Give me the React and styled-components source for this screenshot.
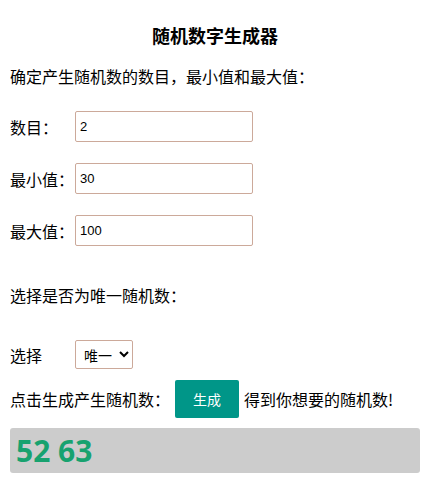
import React, { useState } from 'react';
import styled, { createGlobalStyle } from 'styled-components';

const GlobalStyle = createGlobalStyle`
    body {
        margin: 0;
        background: #fff;
        font-family: "Noto Sans CJK SC", "Noto Sans", sans-serif;
        color: #000;
    }
`;

const Page = styled.div`
    display: flex;
    flex-direction: column;
    padding: 20px 4px 0 10px;
`;

const Title = styled.h1`
    margin: 0;
    height: 30px;
    line-height: 30px;
    font-size: 18px;
    font-weight: bold;
    text-align: center;
`;

const Text = styled.p`
    margin: ${props => props.top}px 0 0;
    height: 24px;
    line-height: 24px;
    font-size: 16px;
`;

const FormRows = styled.div`
    display: flex;
    flex-direction: column;
    gap: 21px;
    margin-top: 23px;
`;

const Row = styled.div`
    display: flex;
    align-items: center;
    margin-top: ${props => props.top || 0}px;
    font-size: 16px;
    line-height: 24px;
    white-space: nowrap;
`;

const Label = styled.label`
    width: 65px;
    flex: none;
`;

const Input = styled.input`
    box-sizing: border-box;
    width: 178px;
    height: 31px;
    padding: 0 4px;
    border: 1px solid #cca99a;
    border-radius: 2px;
    font-family: "Liberation Sans", Arial, sans-serif;
    font-size: 13px;
    outline: none;
`;

const Select = styled.select`
    box-sizing: border-box;
    width: 58px;
    height: 29px;
    padding: 0 4px;
    border: 1px solid #cca99a;
    border-radius: 2px;
    background: #fff;
    font-family: "Noto Sans CJK SC", sans-serif;
    font-size: 14px;
`;

const GenerateButton = styled.button`
    width: 64px;
    height: 38px;
    margin: 0 5px;
    border: none;
    border-radius: 2px;
    background: #009688;
    color: #fff;
    font-family: "Noto Sans CJK SC", sans-serif;
    font-size: 14px;
    cursor: pointer;
`;

const Result = styled.div`
    box-sizing: border-box;
    margin-top: 10px;
    width: 410px;
    height: 45px;
    padding: 0 6px;
    border-radius: 3px;
    background: #cccccc;
    color: #17a26f;
    font-family: "Noto Sans", sans-serif;
    font-weight: bold;
    font-size: 30px;
    line-height: 46px;
`;

export default function App() {
    const [count, setCount] = useState('2');
    const [min, setMin] = useState('30');
    const [max, setMax] = useState('100');
    const [mode, setMode] = useState('unique');
    const [result, setResult] = useState('52 63');

    const generate = () => {
        const n = parseInt(count, 10) || 0;
        const lo = parseInt(min, 10) || 0;
        const hi = parseInt(max, 10) || 0;
        const out = [];
        let guard = 0;
        while (out.length < n && guard < 10000) {
            guard++;
            const v = lo + Math.floor(Math.random() * (hi - lo + 1));
            if (mode === 'unique' && out.includes(v)) continue;
            out.push(v);
        }
        setResult(out.join(' '));
    };

    return (
        <>
            <GlobalStyle />
            <Page>
                <Title>随机数字生成器</Title>
                <Text top={14}>确定产生随机数的数目，最小值和最大值：</Text>
                <FormRows>
                    <Row>
                        <Label>数目：</Label>
                        <Input value={count} onChange={e => setCount(e.target.value)} />
                    </Row>
                    <Row>
                        <Label>最小值：</Label>
                        <Input value={min} onChange={e => setMin(e.target.value)} />
                    </Row>
                    <Row>
                        <Label>最大值：</Label>
                        <Input value={max} onChange={e => setMax(e.target.value)} />
                    </Row>
                </FormRows>
                <Text top={37}>选择是否为唯一随机数：</Text>
                <Row top={33}>
                    <Label>选择</Label>
                    <Select value={mode} onChange={e => setMode(e.target.value)}>
                        <option value="unique">唯一</option>
                        <option value="repeat">重复</option>
                    </Select>
                </Row>
                <Row top={11}>
                    点击生成产生随机数：
                    <GenerateButton onClick={generate}>生成</GenerateButton>
                    得到你想要的随机数!
                </Row>
                <Result>{result}</Result>
            </Page>
        </>
    );
}
